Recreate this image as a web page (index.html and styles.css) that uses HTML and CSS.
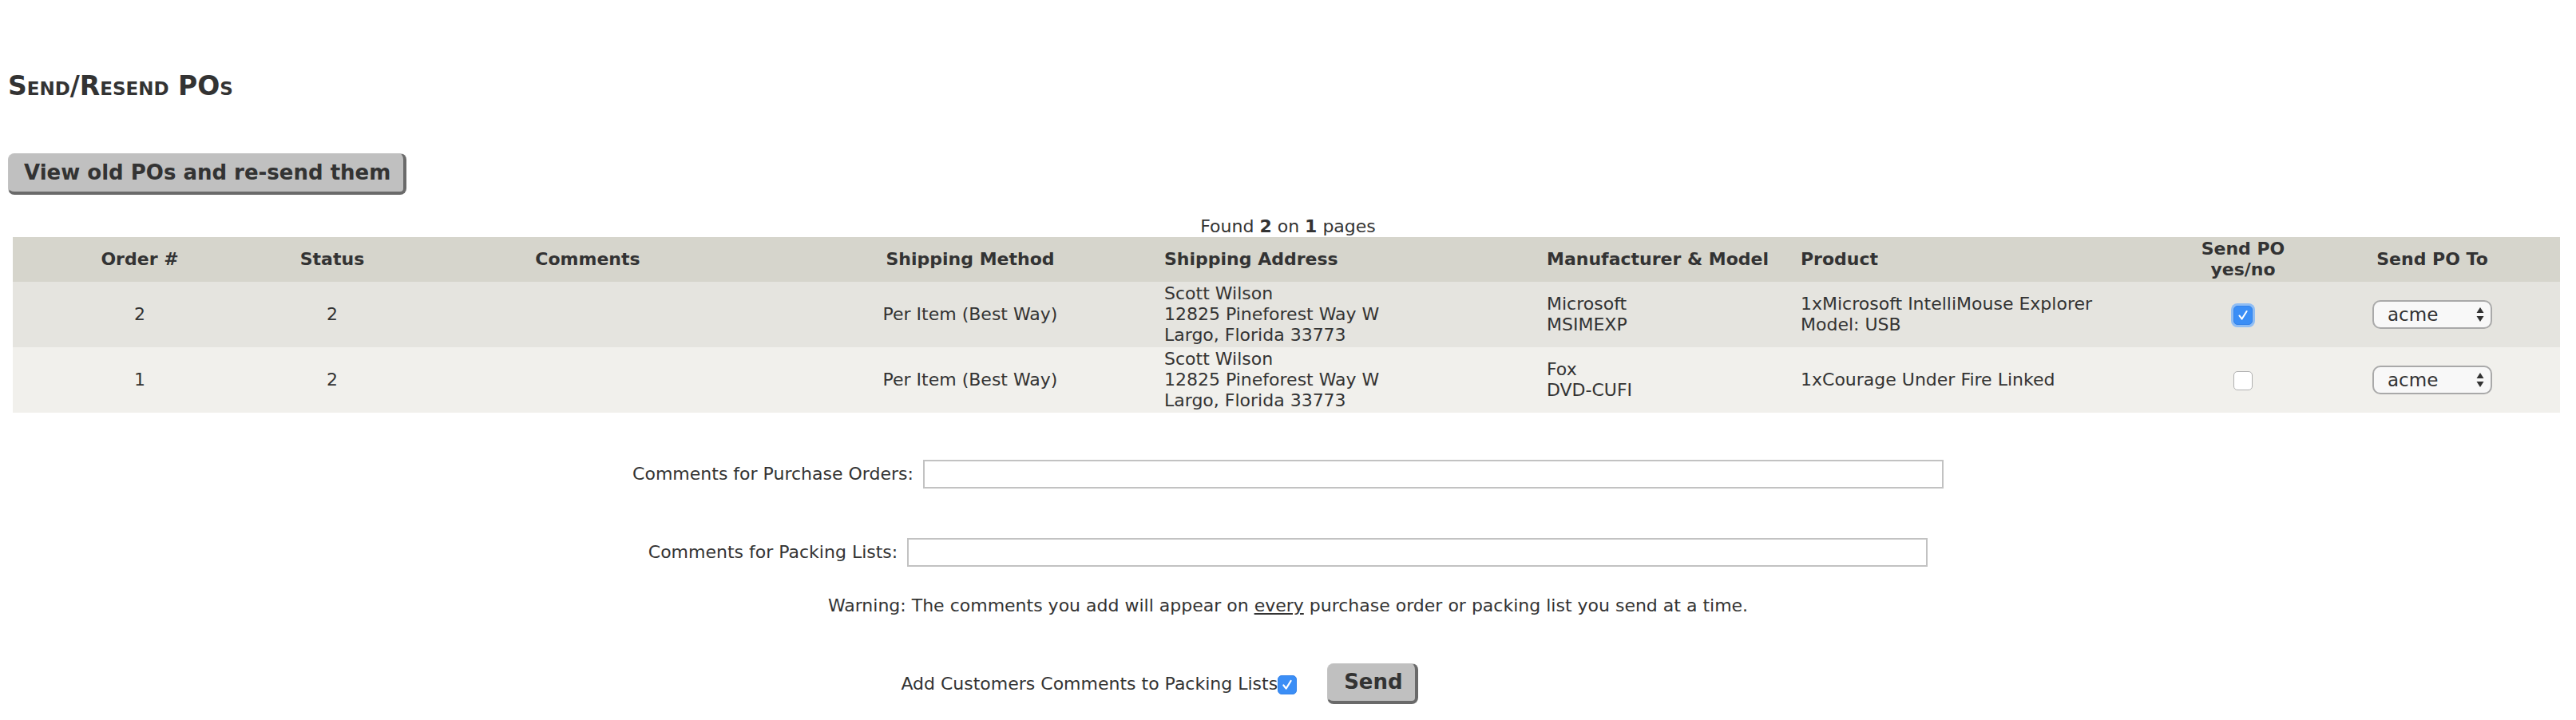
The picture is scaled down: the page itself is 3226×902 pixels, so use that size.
FILE: index.html
```html
<!DOCTYPE html>
<html lang="en">
<head>
<meta charset="utf-8">
<title>Send/Resend POs</title>
<link rel="stylesheet" href="styles.css">
</head>
<body>
<h1 class="page-title">Send/Resend POs</h1>
<button class="btn btn-view" type="button">View old POs and re-send them</button>
<div class="found">Found <b>2</b> on <b>1</b> pages</div>
<table class="po-table">
  <colgroup>
    <col class="c-order"><col class="c-status"><col class="c-comments"><col class="c-method"><col class="c-address"><col class="c-mfr"><col class="c-product"><col class="c-send"><col class="c-to">
  </colgroup>
  <thead>
    <tr>
      <th class="center">Order #</th>
      <th class="center">Status</th>
      <th class="center">Comments</th>
      <th class="center">Shipping Method</th>
      <th>Shipping Address</th>
      <th>Manufacturer &amp; Model</th>
      <th>Product</th>
      <th class="center">Send PO<br>yes/no</th>
      <th class="center">Send PO To</th>
    </tr>
  </thead>
  <tbody>
    <tr class="row-odd">
      <td class="center">2</td>
      <td class="center">2</td>
      <td></td>
      <td class="center">Per Item (Best Way)</td>
      <td>Scott Wilson<br>12825 Pineforest Way W<br>Largo, Florida 33773</td>
      <td>Microsoft<br>MSIMEXP</td>
      <td>1xMicrosoft IntelliMouse Explorer<br>Model: USB</td>
      <td class="center"><span class="cb cb-on cb-focus" role="checkbox" aria-checked="true"><svg class="tick" viewBox="0 0 24 24" width="22" height="22"><path d="M7 12.5 L10.5 17 L17 6.5" fill="none" stroke="#fff" stroke-width="2.2" stroke-linecap="round" stroke-linejoin="round"/></svg></span></td>
      <td class="center"><span class="select-wrap"><select class="select"><option>acme</option></select><svg class="arrows" viewBox="0 0 10 20" width="10" height="20"><path d="M5 1 L9.5 8 L0.5 8 Z M5 19 L9.5 12 L0.5 12 Z" fill="#333"/></svg></span></td>
    </tr>
    <tr class="row-even">
      <td class="center">1</td>
      <td class="center">2</td>
      <td></td>
      <td class="center">Per Item (Best Way)</td>
      <td>Scott Wilson<br>12825 Pineforest Way W<br>Largo, Florida 33773</td>
      <td>Fox<br>DVD-CUFI</td>
      <td>1xCourage Under Fire Linked</td>
      <td class="center"><span class="cb" role="checkbox" aria-checked="false"></span></td>
      <td class="center"><span class="select-wrap"><select class="select"><option>acme</option></select><svg class="arrows" viewBox="0 0 10 20" width="10" height="20"><path d="M5 1 L9.5 8 L0.5 8 Z M5 19 L9.5 12 L0.5 12 Z" fill="#333"/></svg></span></td>
    </tr>
  </tbody>
</table>

<div class="form-row row-po">
  <label class="form-label">Comments for Purchase Orders:</label>
  <input class="text-input" type="text">
</div>
<div class="form-row row-pl">
  <label class="form-label">Comments for Packing Lists:</label>
  <input class="text-input" type="text">
</div>
<p class="warning">Warning: The comments you add will appear on <u>every</u> purchase order or packing list you send at a time.</p>
<div class="send-row">
  <span class="send-label">Add Customers Comments to Packing Lists</span><span class="cb cb-on cb-small" role="checkbox" aria-checked="true"><svg class="tick" viewBox="0 0 24 24" width="22" height="22"><path d="M7 12.5 L10.5 17 L17 6.5" fill="none" stroke="#fff" stroke-width="2.4" stroke-linecap="round" stroke-linejoin="round"/></svg></span>
  <button class="btn btn-send" type="button">Send</button>
</div>
</body>
</html>
```

FILE: styles.css
```css
html, body {
  margin: 0;
  padding: 0;
  background: #ffffff;
}

body {
  padding: 10px;
  font-family: Verdana, "DejaVu Sans", sans-serif;
  font-size: 22px;
  line-height: 26px;
  color: #333333;
}

.page-title {
  margin: 78px 0 0;
  font-size: 33px;
  line-height: 40px;
  font-weight: bold;
  font-variant: small-caps;
  color: #333333;
}

.btn {
  font-family: Verdana, "DejaVu Sans", sans-serif;
  font-weight: bold;
  font-size: 26px;
  line-height: 30px;
  color: #333333;
  background: #c0c0c0;
  border: 1px solid #c4c4c4;
  border-right: 4px solid #6a6a6a;
  border-bottom: 4px solid #6a6a6a;
  border-radius: 8px;
  cursor: pointer;
}

.btn-view {
  display: block;
  margin-top: 64px;
  padding: 8px 16px 9px 19px;
}

.found {
  margin-top: 27px;
  text-align: center;
}

.po-table {
  margin-left: 6px;
  width: 3190px;
  border-collapse: collapse;
  table-layout: fixed;
}

.c-order { width: 318px; }
.c-status { width: 164px; }
.c-comments { width: 476px; }
.c-method { width: 482px; }
.c-address { width: 479px; }
.c-mfr { width: 318px; }
.c-product { width: 479px; }
.c-send { width: 154px; }
.c-to { width: 320px; }

.po-table th,
.po-table td {
  padding: 2px;
  vertical-align: middle;
  text-align: left;
  line-height: 26px;
}

.po-table th {
  background: #d6d5cc;
  font-weight: bold;
}

.po-table .center {
  text-align: center;
}

.row-odd td { background: #e5e4df; height: 78px; }
.row-even td { background: #f1f0ec; height: 78px; }

.cb {
  display: inline-block;
  box-sizing: border-box;
  width: 24px;
  height: 24px;
  border: 1px solid #b0b0b0;
  border-radius: 5px;
  background: #ffffff;
  vertical-align: middle;
  position: relative;
}

.cb-on {
  background: #3b8ef6;
  border-color: #3583ea;
}

.cb-focus {
  box-shadow: 0 0 0 3px #8fbdf4;
}

.tick {
  display: block;
  margin: 0;
}

.select-wrap {
  position: relative;
  display: inline-block;
  vertical-align: middle;
}

.select {
  -webkit-appearance: none;
  appearance: none;
  box-sizing: border-box;
  width: 150px;
  height: 36px;
  padding: 0 0 0 17px;
  border: 2px solid #a9a9a9;
  border-radius: 10px;
  background: #f8f8f8;
  font-family: Verdana, "DejaVu Sans", sans-serif;
  font-size: 23px;
  color: #333333;
  display: block;
}

.arrows {
  position: absolute;
  right: 10px;
  top: 8px;
  pointer-events: none;
}

.form-row {
  display: flex;
  justify-content: center;
  align-items: center;
  gap: 12px;
}

.row-po { margin-top: 59px; }
.row-pl { margin-top: 62px; }

.text-input {
  box-sizing: border-box;
  width: 1278px;
  height: 36px;
  border: 2px solid #c2c2c2;
  background: #ffffff;
  margin: 0;
}

.warning {
  margin: 36px 0 0;
  text-align: center;
}

.send-row {
  margin-top: 59px;
  display: flex;
  justify-content: center;
  align-items: center;
  padding-right: 322px;
}

.cb-small {
  margin-top: 2px;
}

.btn-send {
  margin-left: 38px;
  padding: 7px 15px 9px 20px;
}
```
